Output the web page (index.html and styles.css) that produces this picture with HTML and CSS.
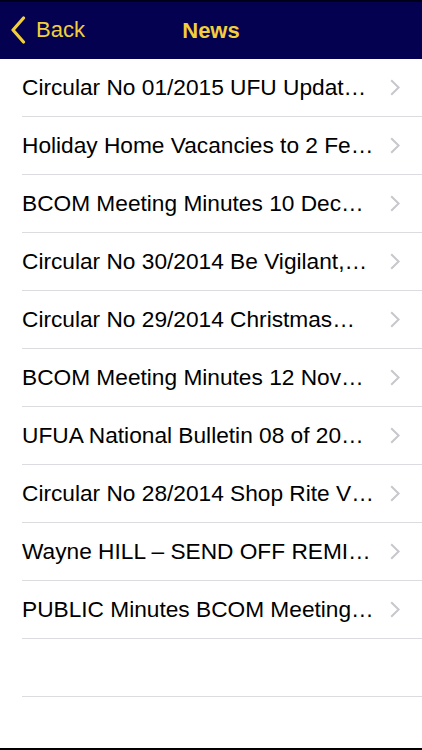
FILE: index.html
```html
<!DOCTYPE html>
<html>
<head>
<meta charset="utf-8">
<link rel="stylesheet" href="styles.css">
</head>
<body>
<div class="screen">
  <header class="nav">
    <div class="back">
      <svg class="back-icon" width="16" height="28" viewBox="0 0 16 28"><path d="M13.5 2 L3 14 L13.5 26" fill="none" stroke="#f2cf3a" stroke-width="3.2" stroke-linecap="round" stroke-linejoin="round"/></svg>
      <span class="back-label">Back</span>
    </div>
    <div class="title">News</div>
  </header>
  <ul class="list">
    <li class="row"><span class="text">Circular No 01/2015 UFU Updat…</span><svg class="chev" width="10" height="17" viewBox="0 0 10 17"><path d="M1.2 1.2 L8.6 8.5 L1.2 15.8" fill="none" stroke="#c7c7cc" stroke-width="2"/></svg></li>
    <li class="row"><span class="text">Holiday Home Vacancies to 2 Fe…</span><svg class="chev" width="10" height="17" viewBox="0 0 10 17"><path d="M1.2 1.2 L8.6 8.5 L1.2 15.8" fill="none" stroke="#c7c7cc" stroke-width="2"/></svg></li>
    <li class="row"><span class="text">BCOM Meeting Minutes 10 Dec…</span><svg class="chev" width="10" height="17" viewBox="0 0 10 17"><path d="M1.2 1.2 L8.6 8.5 L1.2 15.8" fill="none" stroke="#c7c7cc" stroke-width="2"/></svg></li>
    <li class="row"><span class="text">Circular No 30/2014 Be Vigilant,…</span><svg class="chev" width="10" height="17" viewBox="0 0 10 17"><path d="M1.2 1.2 L8.6 8.5 L1.2 15.8" fill="none" stroke="#c7c7cc" stroke-width="2"/></svg></li>
    <li class="row"><span class="text">Circular No 29/2014 Christmas…</span><svg class="chev" width="10" height="17" viewBox="0 0 10 17"><path d="M1.2 1.2 L8.6 8.5 L1.2 15.8" fill="none" stroke="#c7c7cc" stroke-width="2"/></svg></li>
    <li class="row"><span class="text">BCOM Meeting Minutes 12 Nov…</span><svg class="chev" width="10" height="17" viewBox="0 0 10 17"><path d="M1.2 1.2 L8.6 8.5 L1.2 15.8" fill="none" stroke="#c7c7cc" stroke-width="2"/></svg></li>
    <li class="row"><span class="text">UFUA National Bulletin 08 of 20…</span><svg class="chev" width="10" height="17" viewBox="0 0 10 17"><path d="M1.2 1.2 L8.6 8.5 L1.2 15.8" fill="none" stroke="#c7c7cc" stroke-width="2"/></svg></li>
    <li class="row"><span class="text">Circular No 28/2014 Shop Rite V…</span><svg class="chev" width="10" height="17" viewBox="0 0 10 17"><path d="M1.2 1.2 L8.6 8.5 L1.2 15.8" fill="none" stroke="#c7c7cc" stroke-width="2"/></svg></li>
    <li class="row"><span class="text">Wayne HILL – SEND OFF REMI…</span><svg class="chev" width="10" height="17" viewBox="0 0 10 17"><path d="M1.2 1.2 L8.6 8.5 L1.2 15.8" fill="none" stroke="#c7c7cc" stroke-width="2"/></svg></li>
    <li class="row"><span class="text">PUBLIC Minutes BCOM Meeting…</span><svg class="chev" width="10" height="17" viewBox="0 0 10 17"><path d="M1.2 1.2 L8.6 8.5 L1.2 15.8" fill="none" stroke="#c7c7cc" stroke-width="2"/></svg></li>
    <li class="row empty"></li>
  </ul>
</div>
</body>
</html>
```
FILE: styles.css
```css
html, body {
  margin: 0;
  padding: 0;
  background: #ffffff;
}
.screen {
  width: 422px;
  height: 750px;
  overflow: hidden;
  position: relative;
  font-family: "Liberation Sans", Arial, sans-serif;
  border-bottom: 2px solid #000;
  box-sizing: border-box;
}
.nav {
  height: 59px;
  background: #030150;
  border-top: 2px solid #000018;
  box-sizing: border-box;
  display: flex;
  align-items: center;
  justify-content: center;
  position: relative;
}
.back {
  position: absolute;
  left: 10px;
  top: 14px;
  display: flex;
  align-items: center;
  gap: 10px;
}
.back-label {
  color: #f2cf3a;
  font-size: 22px;
}
.title {
  color: #f2cf3a;
  font-size: 22px;
  font-weight: bold;
}
.list {
  list-style: none;
  margin: 0;
  padding: 0 0 0 22px;
}
.row {
  height: 57px;
  border-bottom: 1px solid #dcdce0;
  display: flex;
  align-items: center;
}
.text {
  flex: 1;
  min-width: 0;
  white-space: nowrap;
  overflow: hidden;
  font-size: 22.7px;
  color: #000;
  padding-right: 6px;
}
.chev {
  flex: none;
  margin-right: 22px;
}
```
